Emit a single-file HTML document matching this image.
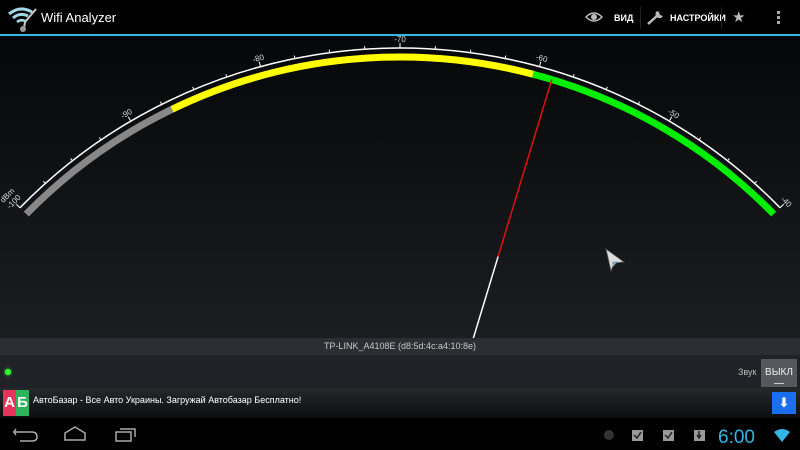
<!DOCTYPE html>
<html><head><meta charset="utf-8"><style>
*{margin:0;padding:0;box-sizing:border-box}
html,body{width:800px;height:450px;overflow:hidden}
body{background:#000;font-family:"Liberation Sans","DejaVu Sans",sans-serif;position:relative}
#bar{position:absolute;left:0;top:0;width:800px;height:34px;background:#000}
#line{position:absolute;left:0;top:34px;width:800px;height:2px;background:#33b5e5}
#gauge{position:absolute;left:0;top:36px;width:800px;height:302px;background:linear-gradient(#060708,#1b1d21);overflow:hidden}
#info{position:absolute;left:0;top:338px;width:800px;height:17px;background:#2b2e33;color:#c8c8c8;font-size:9px;text-align:center;line-height:17px}
#row{position:absolute;left:0;top:355px;width:800px;height:33px;background:#1f2226}
#ad{position:absolute;left:0;top:388px;width:800px;height:30px;background:linear-gradient(#26282b,#0c0d0e)}
#nav{position:absolute;left:0;top:418px;width:800px;height:32px;background:#000;overflow:hidden}
.t{position:absolute;color:#fff;font-weight:bold;font-size:9px}
</style></head><body>
<div id="bar">
<svg style="position:absolute;left:6px;top:4px" width="34" height="28" viewBox="0 0 34 28">
<path d="M3 10 Q14 1 26 8" stroke="#9fd8e8" stroke-width="3" fill="none"/>
<path d="M7 14 Q14 8 22 12" stroke="#9fd8e8" stroke-width="3" fill="none"/>
<path d="M11 18 Q15 15 19 17" stroke="#9fd8e8" stroke-width="2.5" fill="none"/>
<line x1="19" y1="18" x2="30" y2="5" stroke="#ccc" stroke-width="2"/>
<line x1="19" y1="18" x2="18" y2="24" stroke="#ccc" stroke-width="2"/>
<circle cx="17" cy="25" r="3" fill="#999"/>
</svg>
<div style="position:absolute;left:41px;top:10px;color:#fff;font-size:13px">Wifi Analyzer</div>
<svg style="position:absolute;left:585px;top:10px" width="18" height="14" viewBox="0 0 18 14"><path d="M1 7 Q9 -1 17 7 Q9 15 1 7Z" fill="none" stroke="#bbb" stroke-width="1.5"/><circle cx="9" cy="7" r="3" fill="#bbb"/></svg>
<div class="t" style="left:614px;top:13px">ВИД</div>
<div style="position:absolute;left:640px;top:7px;width:1px;height:22px;background:#222"></div>
<svg style="position:absolute;left:646px;top:8px" width="20" height="18" viewBox="0 0 20 18"><path d="M2 16 L12 7" stroke="#bbb" stroke-width="2.5"/><path d="M11 3 A4 4 0 1 0 17 8 L14 7 L13 4 Z" fill="#bbb"/></svg>
<div class="t" style="left:670px;top:13px">НАСТРОЙКИ</div>
<div style="position:absolute;left:721px;top:7px;width:1px;height:22px;background:#222"></div>
<div style="position:absolute;left:732px;top:8px;color:#bbb;font-size:15px">★</div>
<div style="position:absolute;left:777px;top:11px;width:3px;height:3px;background:#aaa;box-shadow:0 5px #aaa,0 10px #aaa"></div>
</div>
<div id="line"></div>
<div id="gauge"><svg id="g" width="800" height="302" viewBox="0 36 800 302" style="position:absolute;left:0;top:0;display:block"></svg></div>
<div id="info">TP-LINK_A4108E (d8:5d:4c:a4:10:8e)</div>
<div id="row">
<div style="position:absolute;left:5px;top:14px;width:6px;height:6px;border-radius:50%;background:#3f3;box-shadow:0 0 3px #3f3"></div>
<div style="position:absolute;left:738px;top:12px;color:#bbb;font-size:9px">Звук</div>
<div style="position:absolute;left:761px;top:4px;width:36px;height:28px;background:#55585c;color:#eee;font-size:10px;text-align:center;line-height:27px">ВЫКЛ<div style="position:absolute;left:13px;top:24px;width:10px;height:1px;background:#ccc"></div></div>
</div>
<div id="ad">
<div style="position:absolute;left:3px;top:2px;width:13px;height:26px;background:#e8345a;color:#fff;font-size:15px;font-weight:bold;text-align:center;line-height:26px">А</div>
<div style="position:absolute;left:16px;top:2px;width:13px;height:26px;background:#2db35c;color:#fff;font-size:15px;font-weight:bold;text-align:center;line-height:26px">Б</div>
<div style="position:absolute;left:33px;top:7px;color:#fff;font-size:9px">АвтоБазар - Все Авто Украины. Загружай Автобазар Бесплатно!</div>
<div style="position:absolute;left:772px;top:4px;width:24px;height:22px;background:#1a6ff0;color:#fff;font-size:13px;text-align:center;line-height:22px;font-weight:bold">⬇</div>
</div>
<div id="nav">
<svg width="800" height="32" viewBox="0 0 800 32" style="position:absolute;left:0;top:0;display:block">
<path d="M16 17 Q13 14 16 11 M13 14 L32 14 Q37 14 37 19 Q37 23 32 23 L20 23" stroke="#aaa" stroke-width="1.5" fill="none"/>
<path d="M65 22 L65 15 L75 9 L85 15 L85 22 Z" stroke="#aaa" stroke-width="1.5" fill="none"/>
<rect x="116" y="14" width="15" height="9" stroke="#aaa" stroke-width="1.5" fill="none"/>
<path d="M120 11 L135 11 L135 19" stroke="#aaa" stroke-width="1.5" fill="none"/>
<circle cx="609" cy="17" r="5" fill="#333"/>
<rect x="632" y="12" width="11" height="11" fill="#999"/><path d="M634 17 L637 20 L641 14" stroke="#222" stroke-width="1.5" fill="none"/>
<rect x="663" y="12" width="11" height="11" fill="#999"/><path d="M665 17 L668 20 L672 14" stroke="#222" stroke-width="1.5" fill="none"/>
<rect x="694" y="12" width="11" height="11" fill="#999"/><path d="M699 13 L699 19 M697 17 L699 20 L701 17" stroke="#222" stroke-width="1.5" fill="none"/>
<text x="718" y="25" fill="#33b5e5" font-size="19" font-family="Liberation Sans">6:00</text>
<path d="M774 14 Q782 8 790 14 L782 24 Z" fill="#33b5e5"/>
</svg>
</div>
<script>
var cx=400,cy=580,s='';
function P(a,R){var r=a*Math.PI/180;return [cx+R*Math.sin(r),cy-R*Math.cos(r)];}
function ang(d){return (d+70)*1.52;}
function arc(d1,d2,R,col,w){var a=P(ang(d1),R),b=P(ang(d2),R);return '<path d="M'+a[0].toFixed(1)+' '+a[1].toFixed(1)+' A'+R+' '+R+' 0 0 1 '+b[0].toFixed(1)+' '+b[1].toFixed(1)+'" stroke="'+col+'" stroke-width="'+w+'" fill="none"/>';}
s+=arc(-100,-40,532,'#fff',1.5);
s+=arc(-100,-87,523,'#888',7);
s+=arc(-87,-60.3,523,'#ff0',7);
s+=arc(-60.3,-40,523,'#0e0',7);
for(var d=-100;d<=-40;d+=2.5){var a=ang(d),L=(d%10==0)?5:3,p=P(a,532),q=P(a,532+L);s+='<line x1="'+p[0]+'" y1="'+p[1]+'" x2="'+q[0]+'" y2="'+q[1]+'" stroke="#fff" stroke-width="1"/>';
if(d%10==0){var t=P(a,538);s+='<text x="'+t[0]+'" y="'+t[1]+'" fill="#ddd" font-size="8" text-anchor="middle" font-family="Liberation Sans" transform="rotate('+a+' '+t[0]+' '+t[1]+')">'+d+'</text>';}}
var t=P(ang(-100),547);s+='<text x="'+t[0]+'" y="'+t[1]+'" fill="#ddd" font-size="8" text-anchor="middle" font-family="Liberation Sans" transform="rotate('+ang(-100)+' '+t[0]+' '+t[1]+')">dBm</text>';
var na=ang(-58.9),n1=P(na,523),n2=P(na,338),n3=P(na,200);
s+='<line x1="'+n1[0]+'" y1="'+n1[1]+'" x2="'+n2[0]+'" y2="'+n2[1]+'" stroke="#e01010" stroke-width="1.5"/>';
s+='<line x1="'+n2[0]+'" y1="'+n2[1]+'" x2="'+n3[0]+'" y2="'+n3[1]+'" stroke="#fff" stroke-width="1.5"/>';
s+='<path d="M606 249 L624 262 L614 263 L611 271 Z" fill="#ddd" stroke="#555" stroke-width="0.8"/><path d="M612 262 L618 261 L613 267Z" fill="#7ab"/>';
document.getElementById('g').innerHTML=s;
</script>
</body></html>
